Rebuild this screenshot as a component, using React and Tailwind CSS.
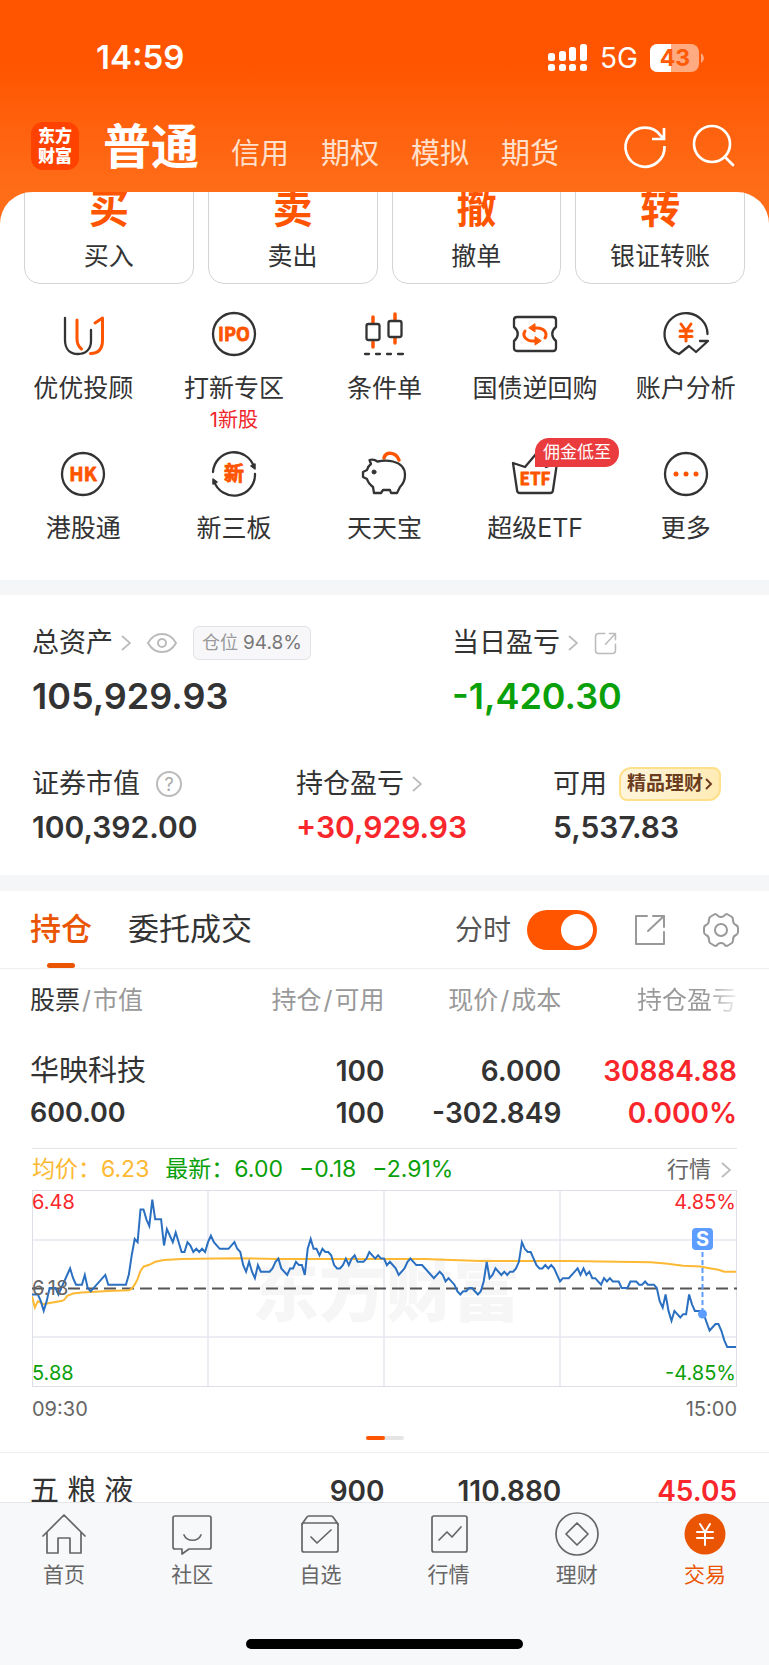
import React, { useState } from "react";
import clsx from "clsx";

const accountTabs = ["信用", "期权", "模拟", "期货"];

const tradeActions = [
  { mark: "买", label: "买入" },
  { mark: "卖", label: "卖出" },
  { mark: "撤", label: "撤单" },
  { mark: "转", label: "银证转账" },
];

const features = [
  { label: "优优投顾", icon: AdvisorIcon },
  { label: "打新专区", icon: IpoIcon, note: "1新股" },
  { label: "条件单", icon: CandleIcon },
  { label: "国债逆回购", icon: TicketIcon },
  { label: "账户分析", icon: AnalysisIcon },
  { label: "港股通", icon: HkIcon },
  { label: "新三板", icon: NewBoardIcon },
  { label: "天天宝", icon: PiggyIcon },
  { label: "超级ETF", icon: EtfIcon, badge: "佣金低至" },
  { label: "更多", icon: MoreIcon },
];

const bottomTabs = [
  { label: "首页", icon: HomeIcon },
  { label: "社区", icon: CommunityIcon },
  { label: "自选", icon: WatchIcon },
  { label: "行情", icon: MarketIcon },
  { label: "理财", icon: WealthIcon },
  { label: "交易", icon: TradeIcon, active: true },
];

// [minute since open, distance from the previous close in 0.01 steps]
const prices = [
  [0, -2], [2, -2], [3, -4], [4, -7], [5, -4], [6, 0], [8, 0], [9, -2], [10, 0], [13, 6],
  [14, 3], [15, 1], [17, 1], [18, 4], [19, 0], [20, -1], [25, 4], [26, 1], [32, 1], [33, 4],
  [34, 10], [35, 15], [36, 14], [37, 24], [38, 24], [39, 21], [40, 19], [41, 27], [42, 21],
  [44, 21], [45, 13], [46, 18], [48, 14], [49, 17], [51, 11], [52, 11], [53, 14], [54, 13],
  [55, 11], [56, 12], [57, 11], [58, 12], [59, 11], [60, 14], [61, 16], [62, 14], [64, 12],
  [67, 12], [69, 14], [70, 12], [71, 11], [72, 7], [73, 5], [74, 8], [75, 5], [76, 3],
  [77, 7], [78, 5], [81, 5], [82, 6], [83, 8], [84, 9], [85, 6], [87, 4], [88, 6], [89, 6],
  [90, 8], [91, 7], [92, 7], [93, 4], [94, 12], [95, 15], [96, 12], [97, 12], [98, 10],
  [99, 12], [100, 11], [101, 11], [102, 10], [103, 7], [104, 6], [105, 6], [106, 7],
  [107, 9], [108, 7], [109, 9], [110, 10], [111, 8], [113, 8], [114, 9], [115, 11],
  [117, 9], [118, 10], [119, 9], [120, 9], [121, 7], [122, 8], [124, 6], [125, 4],
  [127, 6], [128, 8], [129, 9], [131, 7], [133, 7], [137, 3], [139, 5], [140, 4], [141, 2],
  [142, 3], [144, 1], [145, -1], [146, -2], [147, -1], [148, -1], [149, 0], [150, 0],
  [151, -1], [152, -2], [153, -1], [154, 2], [155, 8], [156, 3], [157, 4], [158, 6],
  [160, 4], [161, 5], [162, 4], [163, 5], [164, 5], [165, 6], [166, 8], [167, 14],
  [168, 12], [169, 11], [170, 11], [171, 9], [172, 7], [173, 6], [174, 6], [175, 7],
  [176, 6], [177, 7], [178, 6], [180, 2], [181, 3], [183, 3], [185, 5], [186, 6], [187, 4],
  [188, 6], [189, 4], [190, 5], [191, 3], [192, 3], [194, 1], [195, 3], [196, 2], [197, 3],
  [198, 2], [200, 2], [201, 0], [203, 0], [204, 2], [206, 2], [207, 1], [208, 1], [209, 2],
  [210, 1], [212, 1], [213, 0], [214, -4], [215, -6], [216, -2], [217, -7], [218, -10],
  [219, -7], [221, -9], [222, -8], [223, -8], [224, -2], [225, -5], [226, -7], [228, -7],
  [229, -8], [231, -13], [233, -11], [234, -11], [235, -13], [236, -16], [237, -18],
  [240, -18],
];

const averages = [
  [0, -2.5], [1, -6], [2, -4], [4, -5], [6, -4.6], [10, -4], [11, -3.6], [12, -2.4],
  [14, -1.7], [17, -1.4], [26, -0.9], [33, -0.7], [34, -0.2], [35, 1], [36, 2.7], [37, 5.2],
  [38, 6.5], [40, 7.1], [42, 8], [45, 8.6], [51, 8.9], [69, 9.1], [84, 8.9], [134, 8.9],
  [143, 8.6], [153, 8.3], [183, 8.3], [211, 7.9], [216, 7.5], [222, 6.8], [228, 6.6],
  [230, 6.2], [234, 5.6], [236, 5], [240, 5],
];

const toPoints = (data) =>
  data
    .map(([m, t]) => `${((m * 704) / 240).toFixed(1)},${(98 - t * 3.27).toFixed(1)}`)
    .join(" ");

function Icon({ children, className = "size-11", box = 44, stroke = "#333", weight = 2.3 }) {
  return (
    <svg
      className={className}
      viewBox={`0 0 ${box} ${box}`}
      fill="none"
      stroke={stroke}
      strokeWidth={weight}
      strokeLinecap="round"
      strokeLinejoin="round"
      overflow="visible"
      aria-hidden="true"
    >
      {children}
    </svg>
  );
}

function IconText({ x = 22, y, size, children }) {
  return (
    <text
      x={x}
      y={y}
      fontSize={size}
      fontFamily="Noto Sans CJK SC, sans-serif"
      fontWeight="700"
      textAnchor="middle"
      fill="#ff5500"
      stroke="#ff5500"
      strokeWidth="0.8"
    >
      {children}
    </text>
  );
}

function AdvisorIcon() {
  return (
    <Icon>
      <path d="M4 6v22c0 9 5 14 13 14s13-5 13-13V18" />
      <path d="M16 8v19c0 5 2 8 4.500 10M34 11l7.500-5v22c0 9-4 13.500-12 13.500" stroke="#ff5500" strokeWidth="3" />
    </Icon>
  );
}

function IpoIcon() {
  return (
    <Icon>
      <circle cx="22" cy="22" r="21" />
      <IconText y="29" size="18">IPO</IconText>
    </Icon>
  );
}

function CandleIcon() {
  return (
    <Icon>
      <path d="M11 5v6M11 30v5M33 2v6M33 26v5" stroke="#ff5500" strokeWidth="3.500" />
      <rect x="4.500" y="12" width="13" height="16" rx="2" />
      <rect x="26.500" y="9" width="13" height="16" rx="2" />
      <path d="M3 42h4M14 42h4M25 42h4M36 42h5" />
    </Icon>
  );
}

function TicketIcon() {
  return (
    <Icon>
      <path d="M4 5h36q3 0 3 3v7c-5 4-5 10 0 14v7q0 3-3 3H4q-3 0-3-3v-7c5-4 5-10 0-14V8q0-3 3-3Z" />
      <g stroke="#ff5500" strokeWidth="3">
        <path d="M12 19c-3 5 1 10 8 10h3M32 26c3-5-1-10-8-10h-3" />
      </g>
      <path d="M22 12v8l-6-4ZM22 25v8l6-4Z" fill="#ff5500" stroke="#ff5500" strokeWidth="1" />
    </Icon>
  );
}

function AnalysisIcon() {
  return (
    <Icon>
      <path d="M43.500 22A21.500 21 0 1 0 15 42l10-8 7 6 12-11h-8" />
      <path d="m17 12 5 7 5-7M22 19v10M16 19h12M16 24.500h12" stroke="#ff5500" strokeWidth="3" />
    </Icon>
  );
}

function HkIcon() {
  return (
    <Icon>
      <circle cx="22" cy="22" r="21" />
      <IconText y="29" size="19">HK</IconText>
    </Icon>
  );
}

function NewBoardIcon() {
  return (
    <Icon>
      <path d="M1 20A21 21 0 0 1 42 15M43 22A21 21 0 0 1 2 29" />
      <path d="m39 14 4-2v5ZM1 32v-5l4 3Z" fill="#333" strokeWidth="1.500" />
      <IconText y="29" size="20">新</IconText>
    </Icon>
  );
}

function PiggyIcon() {
  return (
    <Icon>
      <path d="M22 6c2-7 12-6 15 2" stroke="#ff5500" strokeWidth="3.500" />
      <path d="M7.500 8c3-1 6 0 8 1.500 5-1 11-1 15.500 0 8 2 12 7 12 13.500 0 5-2 9-5 12l-3 6h-6l-1-3h-7l-2 3h-7l-1-6q-5-4-6-8l-4-2v-5l4-2q1-4 4-6Z" />
      <circle cx="12" cy="20" r="2" fill="#333" strokeWidth="1" />
    </Icon>
  );
}

function EtfIcon() {
  return (
    <Icon>
      <path d="M0 11l12 4L23 2l10 13 11-4-4 27q0 3-3 3H7q-3 0-3-3Z" />
      <IconText y="33" size="17">ETF</IconText>
    </Icon>
  );
}

function MoreIcon() {
  return (
    <Icon>
      <circle cx="22" cy="22" r="21" />
      <g fill="#ff5500" stroke="none">
        <circle cx="12" cy="22" r="2.500" />
        <circle cx="22" cy="22" r="2.500" />
        <circle cx="32" cy="22" r="2.500" />
      </g>
    </Icon>
  );
}

function NavIcon({ children }) {
  return (
    <Icon stroke="#666" weight={1.7}>
      {children}
    </Icon>
  );
}

function HomeIcon() {
  return (
    <NavIcon>
      <path d="m1 24 21-21 21 21M5 20v21h11V26h12v15h11V20" />
    </NavIcon>
  );
}

function CommunityIcon() {
  return (
    <NavIcon>
      <path d="M5 4h34q2 0 2 2v29q0 2-2 2H19l-7 5v-5H5q-2 0-2-2V6q0-2 2-2ZM14 23c3 7 14 7 17 0" />
    </NavIcon>
  );
}

function WatchIcon() {
  return (
    <NavIcon>
      <rect x="4" y="11" width="36" height="29" rx="2" />
      <path d="m4 12 5-7q1-1 2-1h22q1 0 2 1l5 7M13 25l6 6 14-13" />
    </NavIcon>
  );
}

function MarketIcon() {
  return (
    <NavIcon>
      <rect x="5" y="4" width="35" height="36" rx="2" />
      <path d="m12 28 8-8 5 5 9-10" />
    </NavIcon>
  );
}

function WealthIcon() {
  return (
    <NavIcon>
      <circle cx="22" cy="22" r="21" />
      <path d="M22 11 33 22 22 33 11 22Z" />
    </NavIcon>
  );
}

function TradeIcon() {
  return (
    <Icon stroke="#fff" weight={2}>
      <circle cx="22" cy="22" r="20.500" fill="#ea5504" stroke="none" />
      <path d="m17 12 5 8 5-8M22 20v13M14 20h16M14 26h16" />
    </Icon>
  );
}

function Chevron() {
  return (
    <svg className="h-4 w-[10px]" viewBox="0 0 10 16" fill="none" stroke="#bbb" strokeWidth="1.7" aria-hidden="true">
      <path d="m1 1 8 7-8 7" />
    </svg>
  );
}

function StatusBar() {
  return (
    <div className="flex h-12 items-center justify-between pr-[65px] pl-24 text-white">
      <span className="text-[33px] font-semibold">14:59</span>
      <div className="flex items-center gap-3">
        <svg className="h-7 w-10" viewBox="0 0 40 28" fill="#fff" aria-hidden="true">
          <rect x="0" y="9" width="7" height="8" rx="2.500" />
          <rect x="11" y="7" width="7" height="10" rx="2.500" />
          <rect x="21" y="3" width="7" height="14" rx="2.500" />
          <rect x="32" y="0" width="7" height="17" rx="2.500" />
          <rect x="0" y="20" width="7" height="7" rx="2.500" />
          <rect x="11" y="20" width="7" height="7" rx="2.500" />
          <rect x="21" y="20" width="7" height="7" rx="2.500" />
          <rect x="32" y="20" width="7" height="7" rx="2.500" />
        </svg>
        <span className="text-[28px]">5G</span>
        <svg className="h-7 w-[54px]" viewBox="0 0 54 28" aria-label="电量 43%">
          <rect width="49" height="28" rx="8" fill="#fff" fillOpacity="0.5" />
          <path d="M21 0v28H8q-8 0-8-8V8q0-8 8-8Z" fill="#fff" />
          <path d="M51 9q3 2 3 5t-3 5Z" fill="#fff" fillOpacity="0.5" />
          <text x="25" y="22" fontSize="23" fontWeight="700" textAnchor="middle" fill="#ff5a05">
            43
          </text>
        </svg>
      </div>
    </div>
  );
}

function Header() {
  return (
    <header className="bg-linear-to-b from-[#ff5500] from-35% to-[#ff6d18] pt-[34px] pb-[18px]">
      <StatusBar />
      <div className="mt-9 flex h-14 items-center justify-between pr-[33px] pl-[31px]">
        <div className="flex items-center gap-6">
          <div className="flex size-12 flex-col items-center justify-center rounded-xl bg-[#ff4200] text-[17px] leading-5 font-black text-white">
            <span>东方</span>
            <span>财富</span>
          </div>
          <nav className="flex items-baseline gap-8 pt-2 text-[#ffe0cc]">
            <button className="text-[48px] leading-14 font-bold text-white">普通</button>
            {accountTabs.map((tab) => (
              <button key={tab} className="text-[29px] leading-14">
                {tab}
              </button>
            ))}
          </nav>
        </div>
        <div className="flex gap-6">
          <button aria-label="刷新">
            <Icon stroke="#fff" weight={2.7}>
              <path d="M40.500 22A19.500 19.500 0 1 1 37 12l3 3M40 4v11H28" strokeLinecap="butt" strokeLinejoin="miter" />
            </Icon>
          </button>
          <button aria-label="搜索">
            <Icon stroke="#fff" weight={2.7}>
              <circle cx="20" cy="20" r="18" />
              <path d="m33 33 8 8" />
            </Icon>
          </button>
        </div>
      </div>
    </header>
  );
}

function TradeCards() {
  return (
    <div className="-mt-6 grid grid-cols-4 gap-[14px] px-6">
      {tradeActions.map(({ mark, label }) => (
        <button
          key={label}
          className="flex flex-col items-center rounded-2xl border border-[#d4d4d4] pt-5 pb-[15px]"
        >
          <span className="text-[40px] leading-10 font-bold text-[#ff5500]">{mark}</span>
          <span className="mt-[15px] text-[25px] leading-6">{label}</span>
        </button>
      ))}
    </div>
  );
}

function FeatureGrid() {
  return (
    <div className="grid grid-cols-5 gap-y-5 px-2 pt-7 pb-9">
      {features.map(({ label, icon: FeatureIcon, note, badge }) => (
        <button key={label} className="flex flex-col items-center">
          <span className="relative">
            <FeatureIcon />
            {badge && (
              <span className="absolute -top-[14px] left-[22px] rounded-[14px] rounded-bl-none bg-[#ea3b3e] px-2 text-[17px] leading-[29px] whitespace-nowrap text-white">
                {badge}
              </span>
            )}
          </span>
          <span className="mt-4 text-[25px] leading-8">{label}</span>
          {note && <span className="mt-1 text-[20px] leading-6 text-[#f0262b]">{note}</span>}
        </button>
      ))}
    </div>
  );
}

function ShareIcon({ className, rounded }) {
  return (
    <Icon className={className} box={30} stroke={rounded ? "#bbb" : "#999"} weight={2}>
      {rounded ? (
        <path d="M14 2H6Q2 2 2 6v18q0 4 4 4h18q4 0 4-4v-8M15 16 28 2M20 2h8v8" />
      ) : (
        <path d="M12 1H1v28h28V17M13 16 29 1M18 1h11v11" />
      )}
    </Icon>
  );
}

function Assets() {
  return (
    <section className="px-8 pt-[30px] pb-8">
      <div className="grid grid-cols-[420fr_285fr]">
        <div>
          <div className="flex h-9 items-center text-[27px]">
            <span className="mr-2">总资产</span>
            <Chevron />
            <button aria-label="隐藏资产" className="mr-4 ml-4">
              <svg className="h-5 w-[30px]" viewBox="0 0 30 20" fill="none" stroke="#bbb" strokeWidth="2">
                <path d="M1 10C6 1 12 1 15 1s9 0 14 9c-5 9-11 9-14 9S6 19 1 10Z" />
                <circle cx="15" cy="10" r="4" />
              </svg>
            </button>
            <span className="rounded-md border border-[#e2e2e6] bg-[#f7f7fa] px-2 text-[18px] leading-8 text-[#999]">
              仓位 <span className="text-[19px] text-[#777]">94.8%</span>
            </span>
          </div>
          <p className="mt-[15px] text-[36px] leading-10 font-semibold">105,929.93</p>
        </div>
        <div>
          <div className="flex h-9 items-center text-[27px]">
            <span className="mr-2">当日盈亏</span>
            <Chevron />
            <button aria-label="分享" className="ml-4">
              <ShareIcon className="size-[23px]" rounded />
            </button>
          </div>
          <p className="mt-[15px] text-[36px] leading-10 font-semibold text-[#0aa00a]">-1,420.30</p>
        </div>
      </div>

      <div className="mt-[51px] grid grid-cols-[264fr_257fr_184fr]">
        <div>
          <div className="flex h-[34px] items-center text-[27px]">
            证券市值
            <span className="ml-4 flex size-[26px] items-center justify-center rounded-full border-2 border-[#bbb] text-[18px] text-[#aaa]">
              ?
            </span>
          </div>
          <p className="mt-[10px] text-[30px] leading-8 font-semibold">100,392.00</p>
        </div>
        <div>
          <div className="flex h-[34px] items-center gap-2 text-[27px]">
            持仓盈亏
            <Chevron />
          </div>
          <p className="mt-[10px] text-[30px] leading-8 font-semibold text-[#f9262b]">+30,929.93</p>
        </div>
        <div>
          <div className="flex h-[34px] items-center gap-3 text-[27px] whitespace-nowrap">
            可用
            <a
              href="#wealth"
              className="flex items-center gap-[2px] rounded-lg rounded-tl-xl rounded-br-xl border-2 border-[#ffe08a] bg-linear-to-r from-[#fff5dc] to-[#ffebb5] px-[6px] text-[19px] leading-[30px] font-bold text-[#6b3d1e]"
            >
              精品理财
              <svg className="h-3 w-2" viewBox="0 0 8 12" fill="none" stroke="currentColor" strokeWidth="2" aria-hidden="true">
                <path d="m1 1 5 5-5 5" />
              </svg>
            </a>
          </div>
          <p className="mt-[10px] text-[30px] leading-8 font-semibold">5,537.83</p>
        </div>
      </div>
    </section>
  );
}

function PositionTabs({ showChart, onToggle }) {
  return (
    <div className="flex h-[78px] items-center justify-between border-b border-[#eee] px-[30px]">
      <div className="flex h-full gap-9 text-[31px]">
        <button className="relative font-medium text-[#ea5504]">
          持仓
          <span className="absolute bottom-0 left-1/2 h-[5px] w-7 -translate-x-1/2 rounded-sm bg-[#ea5504]" />
        </button>
        <button>委托成交</button>
      </div>
      <div className="flex items-center">
        <label className="flex cursor-pointer items-center gap-4 text-[28px] text-[#555]">
          分时
          <input type="checkbox" className="peer sr-only" checked={showChart} onChange={onToggle} />
          <span className="flex h-10 w-[70px] items-center rounded-full bg-gray-300 px-1 peer-checked:justify-end peer-checked:bg-[#ff5500]">
            <span className="size-8 rounded-full bg-white" />
          </span>
        </label>
        <button aria-label="分享持仓" className="ml-[38px]">
          <ShareIcon className="size-[30px]" />
        </button>
        <button aria-label="设置" className="ml-[38px]">
          <Icon className="size-9" box={36} stroke="#999" weight={2}>
            <path d="M12 2q2 0 3 2 3 2 6 0 1-2 3-2l5 3q1 1 1 3 0 4 3 5 2 1 2 3v4q0 2-2 3-3 1-3 5 0 2-1 3l-5 3q-2 0-3-2-3-2-6 0-1 2-3 2l-5-3q-1-1-1-3 0-4-3-5-2-1-2-3v-4q0-2 2-3 3-1 3-5 0-2 1-3Z" />
            <circle cx="18" cy="18" r="6" />
          </Icon>
        </button>
      </div>
    </div>
  );
}

function IntradayChart() {
  return (
    <svg className="block h-auto w-full" viewBox="0 0 705 197" fill="none" fontSize="20" role="img" aria-label="华映科技分时图">
      <text x="354" y="126" fontSize="67" fontWeight="900" textAnchor="middle" fill="#f6f6f7">
        东方财富
      </text>
      <path d="M0 50h705M0 147h705M176 1v195M352 1v195M528 1v195" stroke="#e5e7ef" strokeWidth="1.500" />
      <rect x="0.500" y="0.500" width="704" height="196" stroke="#dcdfe6" />
      <path d="M0 98.500h705" stroke="#555" strokeWidth="2" strokeDasharray="12 6" />
      <polyline points={toPoints(averages)} stroke="#fdb933" strokeWidth="2" />
      <polyline points={toPoints(prices)} stroke="#2b70c0" strokeWidth="2" />
      <text x="0" y="19" fill="#f9262b">6.48</text>
      <text x="0" y="105" fill="#666">6.18</text>
      <text x="0" y="190" fill="#0aa00a">5.88</text>
      <text x="704" y="19" textAnchor="end" fill="#f9262b">4.85%</text>
      <text x="704" y="190" textAnchor="end" fill="#0aa00a">-4.85%</text>
      <path d="M670.500 62v58" stroke="#5c9dff" strokeWidth="2" strokeDasharray="5 3" />
      <circle cx="670.500" cy="124" r="4.500" fill="#5c9dff" />
      <rect x="660" y="38" width="21" height="22" rx="4" fill="#5c9dff" />
      <text x="670.500" y="56" fontSize="20" fontWeight="700" textAnchor="middle" fill="#fff">S</text>
    </svg>
  );
}

function ChartPanel() {
  return (
    <div className="px-8 pb-3">
      <div className="flex h-[42px] items-center justify-between border-t border-[#e5e5e5] text-[23px]">
        <div className="flex gap-4 text-[#0aa00a]">
          <span className="text-[#fdb933]">均价：6.23</span>
          <span>最新：6.00</span>
          <span>−0.18</span>
          <span>−2.91%</span>
        </div>
        <a href="#quote" className="flex items-center gap-[10px] pr-[6px] text-[22px] text-[#666]">
          行情
          <Chevron />
        </a>
      </div>
      <IntradayChart />
      <div className="mt-2 flex justify-between text-[20px] leading-7 text-[#666]">
        <span>09:30</span>
        <span>15:00</span>
      </div>
      <div className="mx-auto mt-[13px] flex h-1 w-[38px] rounded-full bg-[#e5e5e5]">
        <span className="w-1/2 rounded-full bg-[#ff5500]" />
      </div>
    </div>
  );
}

function HoldingRow({ name, value, amount, available, price, cost, profit, rate }) {
  return (
    <tr className="text-right text-[28px] leading-[42px] font-semibold">
      <td className="pt-[17px] pb-[14px] pl-[30px] text-left whitespace-nowrap">
        <div className="text-[29px] font-normal">{name}</div>
        <div className="text-[27px]">{value}</div>
      </td>
      <td className="pt-[17px] pb-[14px]">
        <div>{amount}</div>
        <div>{available}</div>
      </td>
      <td className="pt-[17px] pb-[14px]">
        <div>{price}</div>
        <div>{cost}</div>
      </td>
      <td className="pt-[17px] pr-8 pb-[14px] text-[#f9262b]">
        <div>{profit}</div>
        <div>{rate}</div>
      </td>
    </tr>
  );
}

function Holdings() {
  const [showChart, setShowChart] = useState(true);

  return (
    <section>
      <PositionTabs showChart={showChart} onToggle={() => setShowChart(!showChart)} />
      <table className="w-full table-fixed">
        <thead>
          <tr className="h-16 text-right text-[25px] text-[#999]">
            <th className="w-[29%] pl-[30px] text-left font-normal">
              <span className="text-[#333]">股票</span>
              <span className="mx-[2px]">/</span>市值
            </th>
            <th className="w-[21%] font-normal">
              持仓<span className="mx-[2px]">/</span>可用
            </th>
            <th className="w-[23%] font-normal">
              现价<span className="mx-[2px]">/</span>成本
            </th>
            <th className="w-[27%] bg-linear-to-r from-[#999] from-70% to-white to-87% bg-clip-text pr-8 font-normal whitespace-nowrap text-transparent">
              持仓盈亏
            </th>
          </tr>
        </thead>
        <tbody>
          <HoldingRow
            name="华映科技"
            value="600.00"
            amount="100"
            available="100"
            price="6.000"
            cost="-302.849"
            profit="30884.88"
            rate="0.000%"
          />
          {showChart && (
            <tr className="border-b border-[#eee]">
              <td colSpan={4}>
                <ChartPanel />
              </td>
            </tr>
          )}
          <HoldingRow
            name="五 粮 液"
            value="99,792.00"
            amount="900"
            available="900"
            price="110.880"
            cost="110.830"
            profit="45.05"
            rate="0.045%"
          />
        </tbody>
      </table>
    </section>
  );
}

function BottomNav() {
  return (
    <nav className="shrink-0 border-t border-[#e6e6ea] bg-[#f7f8fa] pt-[9px] pb-4">
      <div className="grid grid-cols-6">
        {bottomTabs.map(({ label, icon: TabIcon, active }) => (
          <a
            key={label}
            href={`#${label}`}
            className={clsx("flex flex-col items-center", active ? "text-[#ea5504]" : "text-[#666]")}
          >
            <TabIcon />
            <span className="mt-[5px] text-[21px] leading-7">{label}</span>
          </a>
        ))}
      </div>
      <div className="mx-auto mt-[50px] h-[10px] w-[36%] rounded-full bg-black" />
    </nav>
  );
}

function App() {
  return (
    <div className="flex h-screen flex-col bg-[#ff6d18] font-['Inter','Noto_Sans_CJK_SC',sans-serif] text-[#333]">
      <Header />
      <main className="min-h-0 flex-1 overflow-x-hidden overflow-y-auto rounded-t-[32px] bg-white [scrollbar-width:none]">
        <div className="overflow-hidden">
          <TradeCards />
          <FeatureGrid />
          <div className="h-[15px] bg-[#f5f6f8]" />
          <Assets />
          <div className="h-4 bg-[#f5f6f8]" />
          <Holdings />
        </div>
      </main>
      <BottomNav />
    </div>
  );
}

export default App;
